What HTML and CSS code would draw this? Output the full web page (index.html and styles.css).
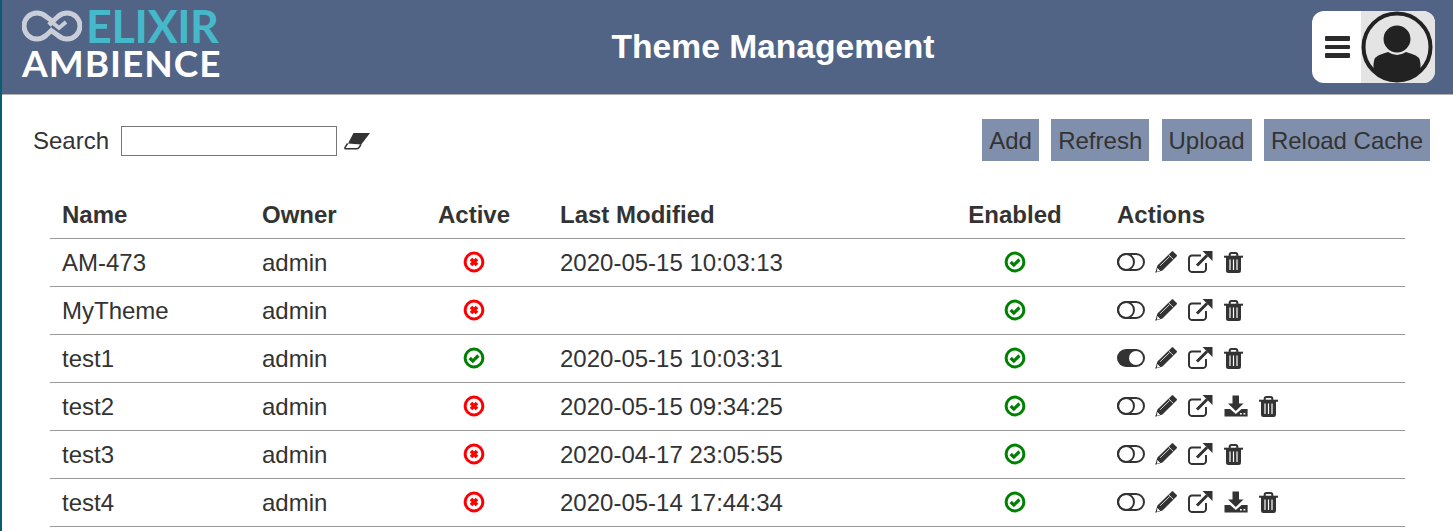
FILE: index.html
```html
<!DOCTYPE html>
<html lang="en">
<head>
<meta charset="utf-8">
<title>Theme Management</title>
<link rel="stylesheet" href="styles.css">
</head>
<body>
<svg class="defs" width="0" height="0" aria-hidden="true">
  <defs>
    <symbol id="i-ok" viewBox="0 0 22 22">
      <circle cx="11" cy="11" r="8.9" fill="none" stroke="#008000" stroke-width="3"/>
      <path d="M6.700 11l3.100 3.100 5.600-5.600" fill="none" stroke="#008000" stroke-width="3.200"/>
    </symbol>
    <symbol id="i-no" viewBox="0 0 22 22">
      <circle cx="11" cy="11" r="8.9" fill="none" stroke="#f00" stroke-width="3"/>
      <path d="M8 8l6 6M14 8l-6 6" fill="none" stroke="#f00" stroke-width="3.600"/>
    </symbol>
    <symbol id="i-off" viewBox="0 0 28 18">
      <rect x="1" y="1" width="26" height="16" rx="8" fill="none" stroke="#333" stroke-width="2"/>
      <circle cx="9" cy="9" r="8" fill="none" stroke="#333" stroke-width="2"/>
    </symbol>
    <symbol id="i-on" viewBox="0 0 28 18">
      <rect x="0" y="0" width="28" height="18" rx="9" fill="#333"/>
      <circle cx="19" cy="9" r="7" fill="#fff"/>
    </symbol>
    <symbol id="i-pen" viewBox="0 0 20 20">
      <path d="M15.500.2q.5-.3 1 .2l3.300 3.300q.5.500 0 1L6.800 17.800.2 19.800l2-6.600z" fill="#333"/>
      <path d="M12.400 3.300l4.300 4.300" stroke="#fff" stroke-width=".7" fill="none"/>
      <path d="M4.700 13.400L13.300 5" stroke="#fff" stroke-width=".7" fill="none"/>
      <path d="M2.200 15.400l2.500 2.500-3 .9z" fill="#fff"/>
    </symbol>
    <symbol id="i-ext" viewBox="0 0 25 22">
      <path d="M13 4.500H4.200A3 3 0 0 0 1 7.500v10.300A3 3 0 0 0 4.200 21h10.600a3 3 0 0 0 3.200-3.200V12" fill="none" stroke="#333" stroke-width="2"/>
      <path d="M9 14.500L19 4.500" fill="none" stroke="#333" stroke-width="3"/>
      <path d="M14.500 0h10v10z" fill="#333"/>
    </symbol>
    <symbol id="i-trash" viewBox="0 0 19 21">
      <path d="M0 4.700h19" stroke="#333" stroke-width="2" fill="none"/>
      <path d="M5.700 4.500V2.700Q5.700 1 7.500 1h4q1.800 0 1.800 1.700v1.800" fill="none" stroke="#333" stroke-width="2"/>
      <path d="M2 4.700h15v14q0 2.300-2.300 2.300H4.300Q2 21 2 18.700z" fill="#333"/>
      <path d="M6 7.500v10.500M9.500 7.500v10.500M13 7.500v10.500" stroke="#fff" stroke-width="1.200" fill="none"/>
    </symbol>
    <symbol id="i-dl" viewBox="0 0 24 22">
      <path d="M8.500.5H15v8h4.500L11.800 16 4 8.500h4.500z" fill="#333"/>
      <path d="M.5 14H6l5.800 5 5.800-5h6v7.500H.5z" fill="#333"/>
      <rect x="16" y="18" width="1.800" height="1.500" fill="#fff"/>
      <rect x="19.500" y="18" width="1.800" height="1.500" fill="#fff"/>
    </symbol>
  </defs>
</svg>

<header class="topbar">
  <div class="logo">
    <div class="logo-top">
      <svg class="logo-mark" viewBox="0 0 60 32" width="60" height="32" aria-hidden="true">
        <path d="M30 11 L24 6.500 Q20 3 15 3 A13 13 0 0 0 15 29 Q20 29 24 25.500 L31 19 M30 21 L36 25.500 Q40 29 45 29 A13 13 0 0 0 45 3 Q40 3 36 6.500 L27 15" fill="none" stroke="#c9ced8" stroke-width="5"/>
        <path d="M31 13 L37 18 L44 12" fill="none" stroke="#c9ced8" stroke-width="4"/>
      </svg>
      <span class="logo-elixir">ELIXIR</span>
    </div>
    <div class="logo-ambience">AMBIENCE</div>
  </div>
  <h1 class="title">Theme Management</h1>
  <div class="usermenu">
    <div class="burger"><span></span><span></span><span></span></div>
    <div class="avatar">
      <svg viewBox="0 0 72 72" width="72" height="72" aria-hidden="true">
        <path d="M12.500 60V53Q12.500 45 21 43L27 41Q36 47 45 41L51 43Q59.500 45 59.500 53V60Q50 69.500 36 69.500Q22 69.500 12.500 60z" fill="#222"/>
        <circle cx="36" cy="28" r="14.200" fill="#222" stroke="#e4e4e4" stroke-width="1.500"/>
        <circle cx="36" cy="36" r="33.500" fill="none" stroke="#222" stroke-width="4"/>
      </svg>
    </div>
  </div>
</header>

<main class="content">
  <div class="toolbar">
    <div class="search">
      <label class="search-label" for="q">Search</label>
      <input class="search-input" id="q" type="text">
      <svg class="eraser" viewBox="0 0 26 18" width="26" height="18" aria-hidden="true">
        <path d="M9.500 1H26L16.500 13.500H3z" fill="#333"/>
        <path d="M3.500 11.500L1 15.500Q.5 16.800 2 16.800H12.500Q14 16.800 15 15.500L17 12.500" fill="#fff" stroke="#333" stroke-width="1.500"/>
      </svg>
    </div>
    <div class="actions">
      <button class="btn" type="button">Add</button>
      <button class="btn" type="button">Refresh</button>
      <button class="btn" type="button">Upload</button>
      <button class="btn" type="button">Reload Cache</button>
    </div>
  </div>

  <table class="themes">
    <colgroup>
      <col class="c-name"><col class="c-owner"><col class="c-active"><col class="c-mod"><col class="c-enabled"><col class="c-actions">
    </colgroup>
    <thead>
      <tr><th>Name</th><th>Owner</th><th class="ctr">Active</th><th>Last Modified</th><th class="ctr">Enabled</th><th>Actions</th></tr>
    </thead>
    <tbody>
      <tr>
        <td>AM-473</td><td>admin</td>
        <td class="ctr"><svg class="st"><use href="#i-no"/></svg></td>
        <td>2020-05-15 10:03:13</td>
        <td class="ctr"><svg class="st"><use href="#i-ok"/></svg></td>
        <td><div class="ic"><svg class="tg"><use href="#i-off"/></svg><svg class="pen"><use href="#i-pen"/></svg><svg class="ext"><use href="#i-ext"/></svg><svg class="tr"><use href="#i-trash"/></svg></div></td>
      </tr>
      <tr>
        <td>MyTheme</td><td>admin</td>
        <td class="ctr"><svg class="st"><use href="#i-no"/></svg></td>
        <td></td>
        <td class="ctr"><svg class="st"><use href="#i-ok"/></svg></td>
        <td><div class="ic"><svg class="tg"><use href="#i-off"/></svg><svg class="pen"><use href="#i-pen"/></svg><svg class="ext"><use href="#i-ext"/></svg><svg class="tr"><use href="#i-trash"/></svg></div></td>
      </tr>
      <tr>
        <td>test1</td><td>admin</td>
        <td class="ctr"><svg class="st"><use href="#i-ok"/></svg></td>
        <td>2020-05-15 10:03:31</td>
        <td class="ctr"><svg class="st"><use href="#i-ok"/></svg></td>
        <td><div class="ic"><svg class="tg"><use href="#i-on"/></svg><svg class="pen"><use href="#i-pen"/></svg><svg class="ext"><use href="#i-ext"/></svg><svg class="tr"><use href="#i-trash"/></svg></div></td>
      </tr>
      <tr>
        <td>test2</td><td>admin</td>
        <td class="ctr"><svg class="st"><use href="#i-no"/></svg></td>
        <td>2020-05-15 09:34:25</td>
        <td class="ctr"><svg class="st"><use href="#i-ok"/></svg></td>
        <td><div class="ic"><svg class="tg"><use href="#i-off"/></svg><svg class="pen"><use href="#i-pen"/></svg><svg class="ext"><use href="#i-ext"/></svg><svg class="dl"><use href="#i-dl"/></svg><svg class="tr"><use href="#i-trash"/></svg></div></td>
      </tr>
      <tr>
        <td>test3</td><td>admin</td>
        <td class="ctr"><svg class="st"><use href="#i-no"/></svg></td>
        <td>2020-04-17 23:05:55</td>
        <td class="ctr"><svg class="st"><use href="#i-ok"/></svg></td>
        <td><div class="ic"><svg class="tg"><use href="#i-off"/></svg><svg class="pen"><use href="#i-pen"/></svg><svg class="ext"><use href="#i-ext"/></svg><svg class="tr"><use href="#i-trash"/></svg></div></td>
      </tr>
      <tr>
        <td>test4</td><td>admin</td>
        <td class="ctr"><svg class="st"><use href="#i-no"/></svg></td>
        <td>2020-05-14 17:44:34</td>
        <td class="ctr"><svg class="st"><use href="#i-ok"/></svg></td>
        <td><div class="ic"><svg class="tg"><use href="#i-off"/></svg><svg class="pen"><use href="#i-pen"/></svg><svg class="ext"><use href="#i-ext"/></svg><svg class="dl"><use href="#i-dl"/></svg><svg class="tr"><use href="#i-trash"/></svg></div></td>
      </tr>
    </tbody>
  </table>
</main>
</body>
</html>
```

FILE: styles.css
```css
* { box-sizing: border-box; }
html, body { height: 100%; }
body {
  margin: 0;
  overflow: hidden;
  background: #fff;
  border-left: 2px solid #0b5c70;
  font-family: "Liberation Sans", Arial, sans-serif;
  font-size: 24px;
  color: #333;
}
.defs { display: block; height: 0; }

.topbar {
  display: flex;
  align-items: center;
  height: 95px;
  padding: 0 18px 0 20px;
  background: #526486;
  border-bottom: 1px solid #b0b0b0;
}
.logo { width: 212px; flex: none; margin-top: -5px; font-family: Lato, sans-serif; font-weight: 700; }
.logo-top { display: flex; align-items: center; height: 36px; }
.logo-mark { flex: none; margin-right: 4px; }
.logo-elixir { font-size: 45px; line-height: 36px; color: #45b8c9; letter-spacing: -.4px; }
.logo-ambience { font-size: 37px; line-height: 38px; color: #fff; letter-spacing: 1px; }
.title {
  flex: 1;
  margin: 0;
  text-align: center;
  font-size: 33.600px;
  font-weight: 700;
  color: #fff;
}
.usermenu {
  flex: none;
  display: flex;
  width: 123px;
  height: 72px;
  border-radius: 12px;
  overflow: hidden;
  background: #fff;
}
.burger {
  width: 49px;
  display: flex;
  flex-direction: column;
  justify-content: center;
  gap: 4px;
  padding-left: 13px;
}
.burger span { display: block; width: 25px; height: 4.500px; background: #2b2b2b; border-radius: 1px; }
.avatar { flex: 1; background: #e4e4e4; display: flex; }

.content { padding: 24px 23px 0 31px; }
.toolbar { display: flex; justify-content: space-between; align-items: flex-start; }
.search { display: flex; align-items: center; height: 44px; }
.search-label { margin-right: 12px; }
.search-input {
  width: 216px;
  height: 30px;
  margin: 0 7px 0 0;
  border: 1px solid #767676;
  background: #fff;
  padding: 0 4px;
}
.eraser { flex: none; }
.actions { display: flex; gap: 12.300px; }
.btn {
  height: 42px;
  padding: 2px 7px 0;
  border: 0;
  background: #808fab;
  color: #333;
  font: inherit;
}

.themes {
  table-layout: fixed;
  width: 1355px;
  margin: 27px 0 0 17px;
  border-collapse: collapse;
}
.c-name { width: 200px; }
.c-owner { width: 150px; }
.c-active { width: 148px; }
.c-mod { width: 377px; }
.c-enabled { width: 180px; }
.c-actions { width: 300px; }
.themes th, .themes td {
  height: 48px;
  padding: 0 12px;
  text-align: left;
  border-bottom: 1px solid #999;
  font-size: 24px;
  line-height: 27px;
  vertical-align: middle;
}
.themes th { font-weight: 700; padding-top: 2px; }
.themes .ctr { text-align: center; }
.st { display: block; width: 22px; height: 22px; margin: 0 auto; }
.ic { display: flex; align-items: center; }
.ic svg { display: block; flex: none; }
.tg { width: 28px; height: 18px; margin-right: 10px; }
.pen { width: 22px; height: 22px; margin-right: 11px; }
.ext { width: 25px; height: 22px; margin-right: 11px; }
.dl { width: 24px; height: 22px; margin-right: 11px; }
.tr { width: 19px; height: 21px; }
```
